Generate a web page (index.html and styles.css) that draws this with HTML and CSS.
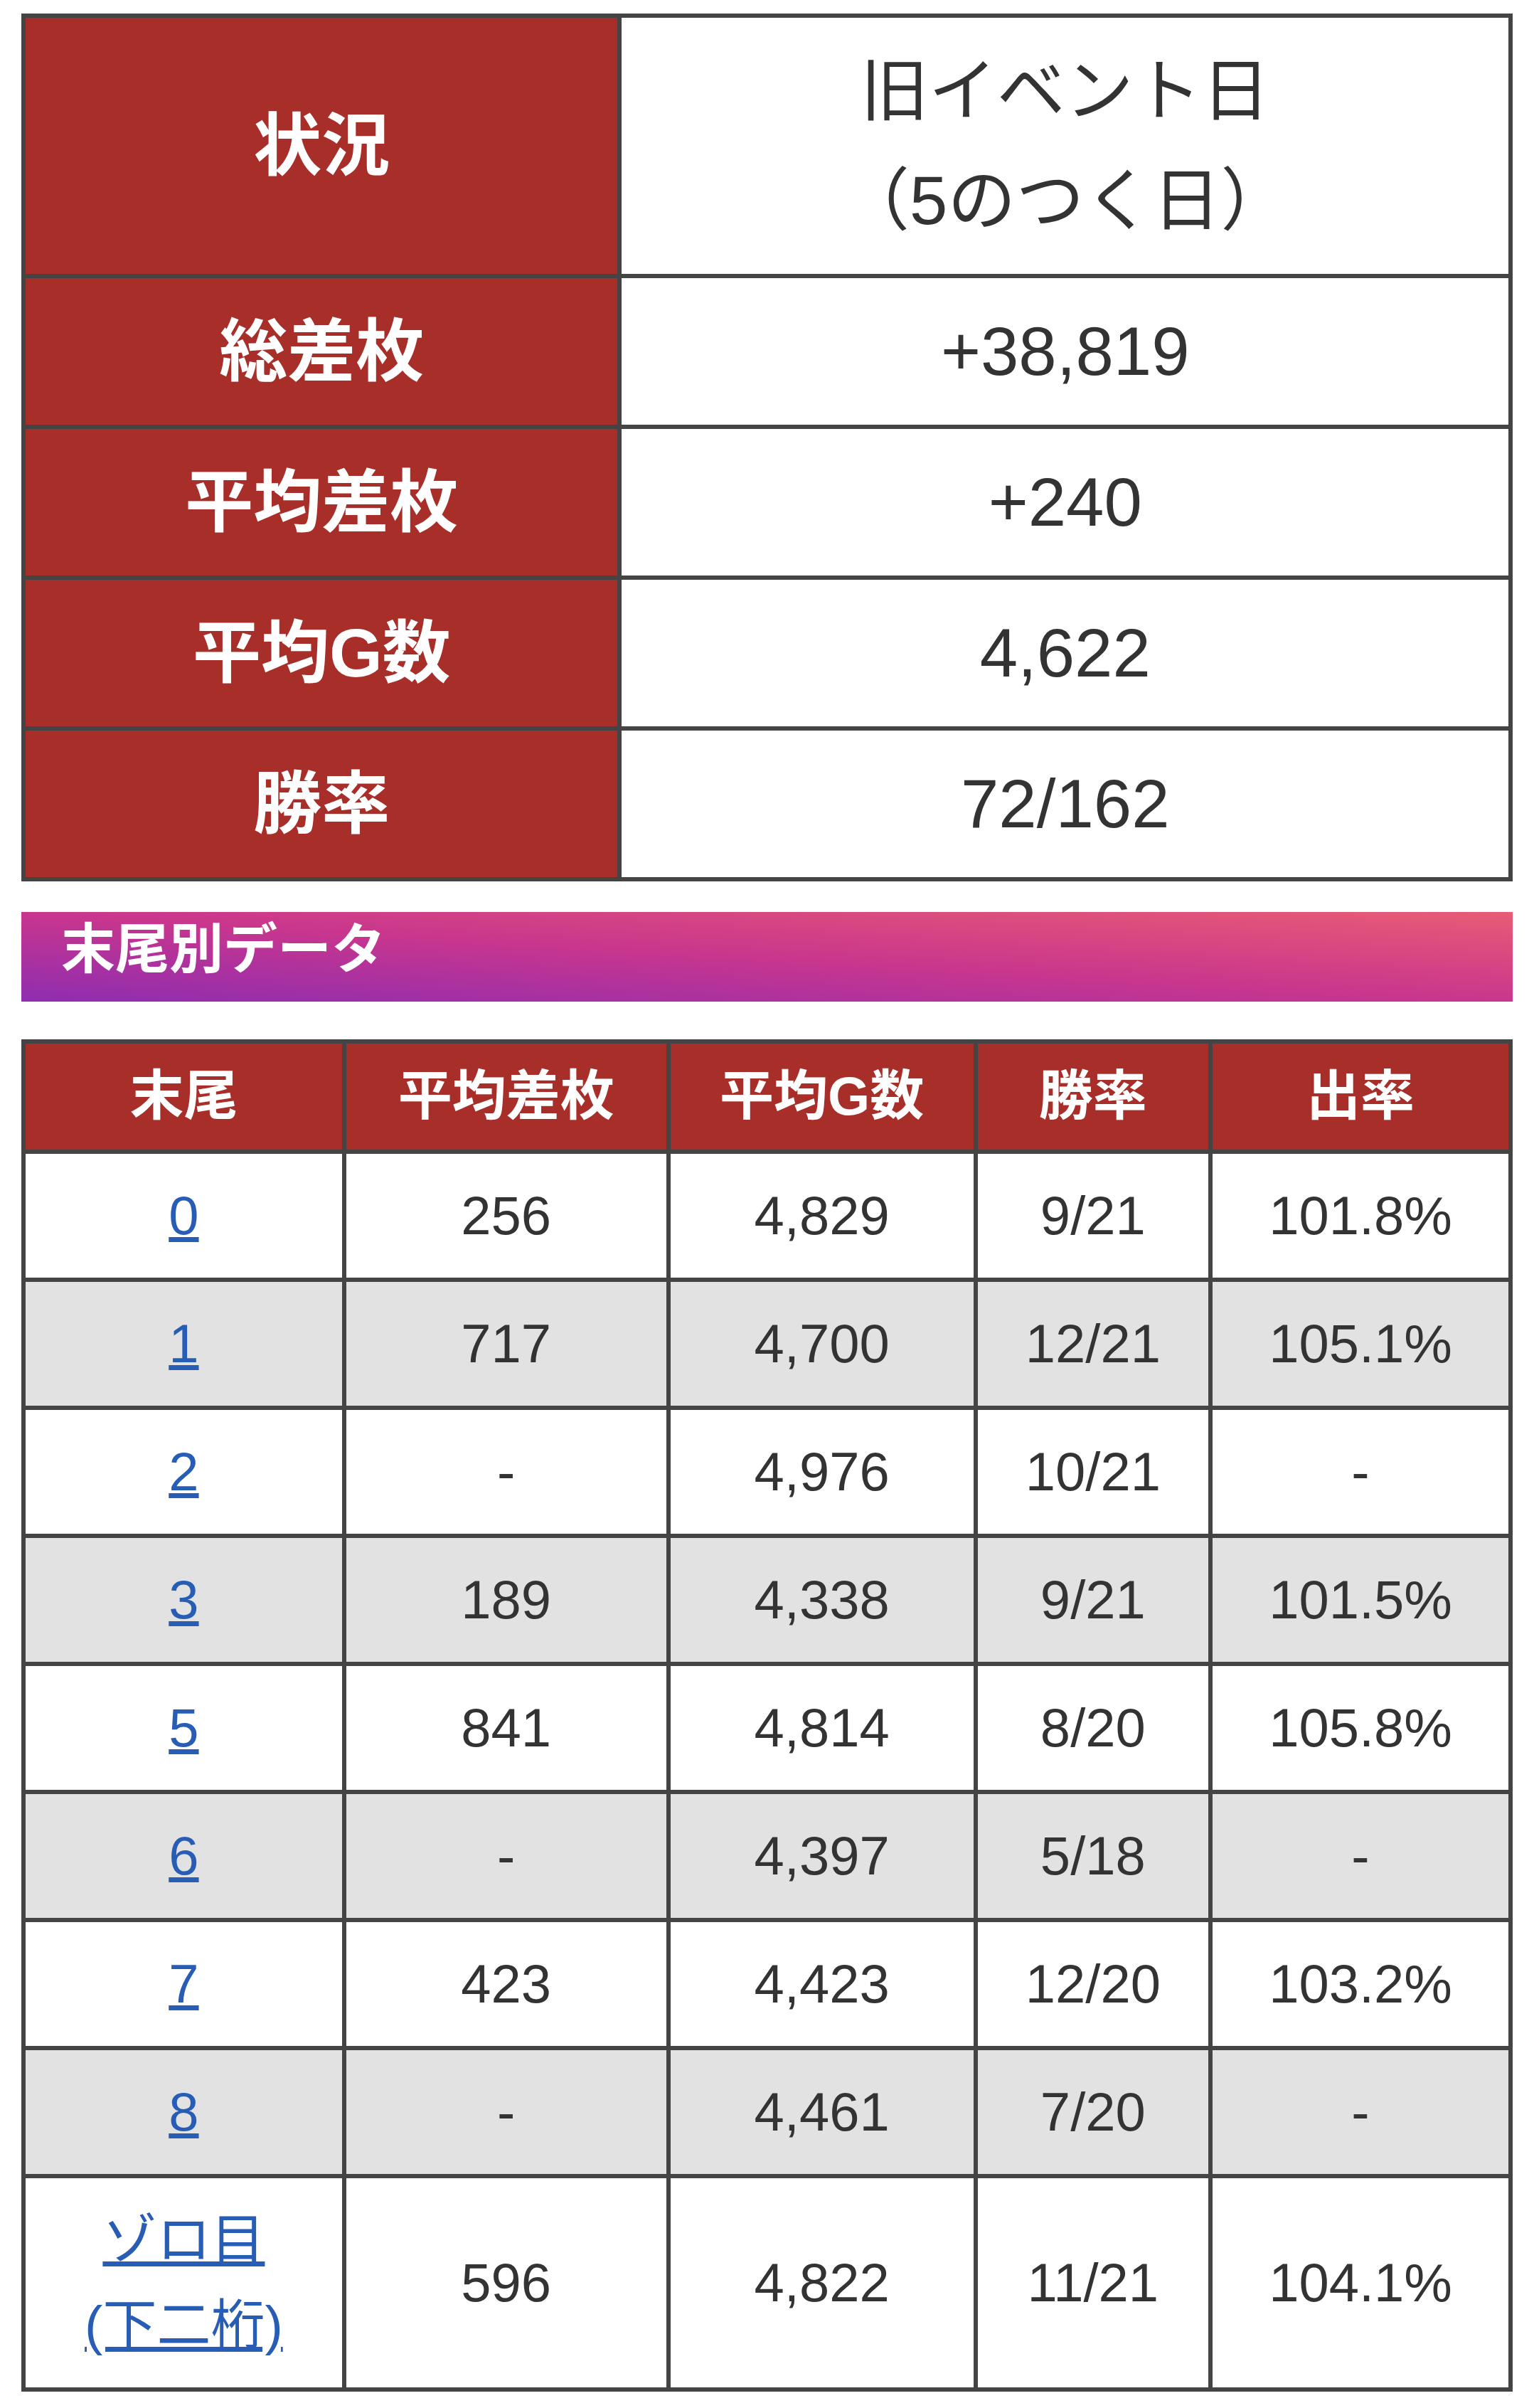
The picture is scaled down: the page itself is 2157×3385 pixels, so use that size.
FILE: index.html
```html
<!DOCTYPE html>
<html lang="ja">
<head>
<meta charset="utf-8">
<title>末尾別データ</title>
<link rel="stylesheet" href="styles.css">
</head>
<body>
<div class="page">
  <table class="summary">
    <colgroup><col class="sum-label"><col class="sum-value"></colgroup>
    <tbody>
      <tr><th>状況</th><td>旧イベント日<br>（5のつく日）</td></tr>
      <tr><th>総差枚</th><td>+38,819</td></tr>
      <tr><th>平均差枚</th><td>+240</td></tr>
      <tr><th>平均G数</th><td>4,622</td></tr>
      <tr><th>勝率</th><td>72/162</td></tr>
    </tbody>
  </table>

  <h2 class="section-title">末尾別データ</h2>

  <table class="tail">
    <colgroup>
      <col class="c1"><col class="c2"><col class="c3"><col class="c4"><col class="c5">
    </colgroup>
    <thead>
      <tr><th>末尾</th><th>平均差枚</th><th>平均G数</th><th>勝率</th><th>出率</th></tr>
    </thead>
    <tbody>
      <tr><td><a href="#">0</a></td><td>256</td><td>4,829</td><td>9/21</td><td>101.8%</td></tr>
      <tr><td><a href="#">1</a></td><td>717</td><td>4,700</td><td>12/21</td><td>105.1%</td></tr>
      <tr><td><a href="#">2</a></td><td>-</td><td>4,976</td><td>10/21</td><td>-</td></tr>
      <tr><td><a href="#">3</a></td><td>189</td><td>4,338</td><td>9/21</td><td>101.5%</td></tr>
      <tr><td><a href="#">5</a></td><td>841</td><td>4,814</td><td>8/20</td><td>105.8%</td></tr>
      <tr><td><a href="#">6</a></td><td>-</td><td>4,397</td><td>5/18</td><td>-</td></tr>
      <tr><td><a href="#">7</a></td><td>423</td><td>4,423</td><td>12/20</td><td>103.2%</td></tr>
      <tr><td><a href="#">8</a></td><td>-</td><td>4,461</td><td>7/20</td><td>-</td></tr>
      <tr><td><a href="#">ゾロ目<br>(下二桁)</a></td><td>596</td><td>4,822</td><td>11/21</td><td>104.1%</td></tr>
    </tbody>
  </table>
</div>
</body>
</html>
```

FILE: styles.css
```css
html, body {
  margin: 0;
  padding: 0;
  background: #ffffff;
}

body {
  font-family: "Liberation Sans", "Noto Sans CJK JP", sans-serif;
  color: #333333;
}

.page {
  padding: 19px 30px 24px 30px;
}

/* ---------- summary table ---------- */
.summary {
  width: 100%;
  border-collapse: collapse;
  table-layout: fixed;
  border: 6px solid #444444;
}

.sum-label { width: 40.1%; }
.sum-value { width: 59.9%; }

.summary th,
.summary td {
  border: 6px solid #444444;
  text-align: center;
  vertical-align: middle;
  font-size: 96px;
  line-height: 154px;
  padding: 26px 10px;
}

.summary th {
  background: #a82e2a;
  color: #ffffff;
  font-weight: 700;
}

.summary td {
  background: #ffffff;
  color: #333333;
  font-weight: 400;
}

/* ---------- section title ---------- */
.section-title {
  margin: 43px 0 53px 0;
  height: 126px;
  box-sizing: border-box;
  padding: 0 0 20px 56px;
  line-height: 106px;
  font-size: 76px;
  font-weight: 700;
  color: #ffffff;
  background: linear-gradient(to top right, #8f2db0 0%, #c9368d 50%, #e85c75 100%);
}

/* ---------- tail table ---------- */
.tail {
  width: 100%;
  border-collapse: collapse;
  table-layout: fixed;
  border: 6px solid #444444;
}

.c1 { width: 21.56%; }
.c2 { width: 21.8%; }
.c3 { width: 20.66%; }
.c4 { width: 15.8%; }
.c5 { width: 20.18%; }

.tail th,
.tail td {
  border: 6px solid #444444;
  text-align: center;
  vertical-align: middle;
  font-size: 76px;
  line-height: 120px;
}

.tail th {
  background: #a82e2a;
  color: #ffffff;
  font-weight: 700;
  padding: 14px 4px 15px 4px;
}

.tail td {
  color: #333333;
  font-weight: 400;
  padding: 27px 4px;
  background: #ffffff;
}

.tail tbody tr:nth-child(even) td {
  background: #e2e2e2;
}

.tail a {
  color: #275db5;
  text-decoration: underline;
}
```
